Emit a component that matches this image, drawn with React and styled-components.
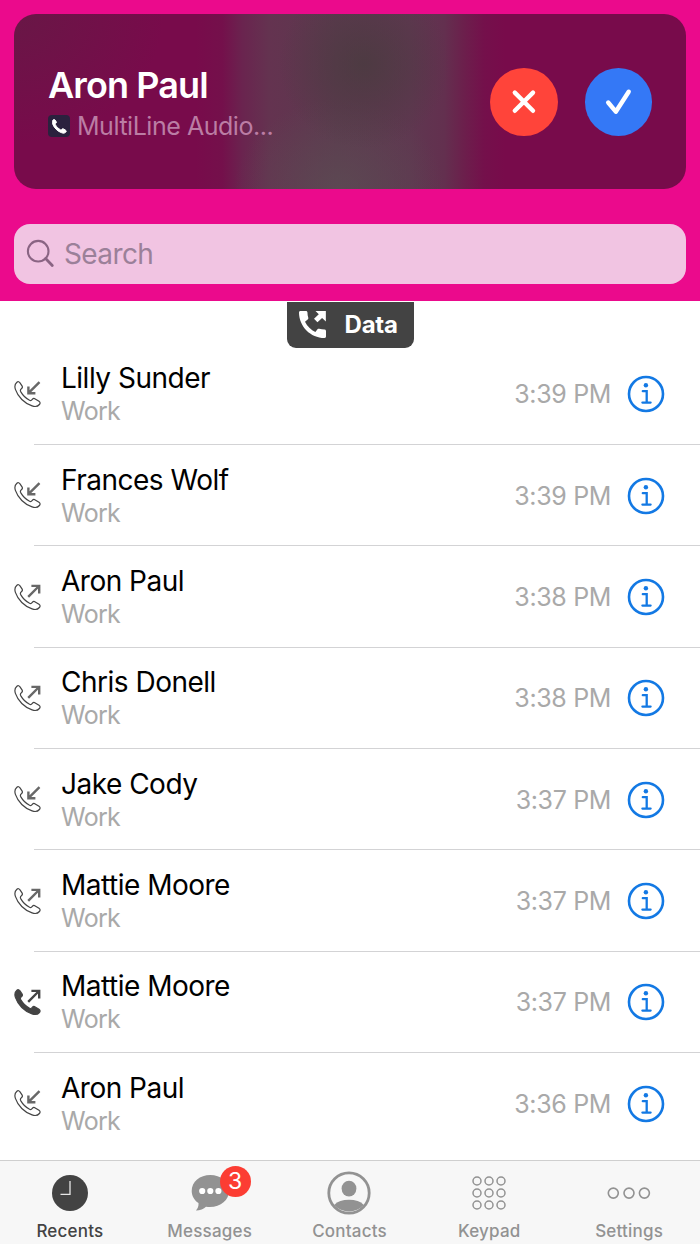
import styled, { createGlobalStyle } from "styled-components";

const calls = [
  { name: "Lilly Sunder", time: "3:39 PM", type: "in" },
  { name: "Frances Wolf", time: "3:39 PM", type: "in" },
  { name: "Aron Paul", time: "3:38 PM", type: "out" },
  { name: "Chris Donell", time: "3:38 PM", type: "out" },
  { name: "Jake Cody", time: "3:37 PM", type: "in" },
  { name: "Mattie Moore", time: "3:37 PM", type: "out" },
  { name: "Mattie Moore", time: "3:37 PM", type: "out", filled: true },
  { name: "Aron Paul", time: "3:36 PM", type: "in" },
];

const HANDSET =
  "M2.5 1.2C3.6.3 4.8.7 5.6 1.9L7.6 4.9C8.3 6 8 7 7 7.7C5.8 8.6 5.6 9.2 6.3 10.6C8.2 14 11.5 17.3 15.2 19.3C16.4 19.9 17 19.6 17.9 18.4C18.7 17.4 19.8 17.3 20.8 17.9L24.6 20.3C25.9 21.2 26 22.3 25 23.5C23.4 25.5 20.8 26 17.7 24.9C10 22.3 3.5 15.8 1 8.4C0 5.3.5 2.9 2.5 1.2Z";

const SOLID_HANDSET =
  "M20.01 15.38c-1.23 0-2.42-.2-3.53-.56-.35-.12-.74-.03-1.01.24l-1.57 1.97c-2.83-1.35-5.48-3.9-6.89-6.83l1.95-1.66c.27-.28.35-.67.24-1.02-.37-1.11-.56-2.3-.56-3.53 0-.54-.45-.99-.99-.99H4.19C3.65 3 3 3.24 3 3.99 3 13.28 10.73 21 20.01 21c.71 0 .99-.63.99-1.18v-3.45c0-.54-.45-.99-.99-.99z";

function CallIcon({ type, filled }) {
  const arrow =
    type === "in"
      ? "M25.1 1.2L14 12.2M14 5.4V12.3H21"
      : "M13.8 12.8L24.6 2M17 1.9H24.8V9.6";
  return (
    <svg width="27" height="27" viewBox="-.4 0 27 27" fill="none">
      <path
        d={HANDSET}
        fill={filled ? "#444" : "none"}
        stroke="#444"
        strokeWidth="1.2"
      />
      <path d={arrow} stroke={filled ? "#444" : "#686868"} strokeWidth="2.4" />
    </svg>
  );
}

function InfoIcon() {
  return (
    <svg width="38" height="38" viewBox="0 0 38 38" fill="none">
      <circle cx="19" cy="19" r="17" stroke="#1379e4" strokeWidth="2.6" />
      <circle cx="18.9" cy="10.2" r="2.2" fill="#1379e4" />
      <path
        d="M15.8 16.2H19.7V27.6M15.4 27.6H23.6"
        stroke="#1379e4"
        strokeWidth="2.3"
        strokeLinecap="round"
      />
    </svg>
  );
}

function RecentsIcon() {
  return (
    <svg width="44" height="44" viewBox="0 0 44 44" fill="none">
      <circle cx="22" cy="22" r="18" fill="#434343" />
      <path d="M22 10V23.3H12.5" stroke="#e6e6e6" strokeWidth="1.3" />
    </svg>
  );
}

function MessagesIcon() {
  return (
    <svg width="44" height="44" viewBox="0 0 44 44">
      <path
        d="M22.3 4C12 4 3.7 10.7 3.7 20C3.7 25 6.3 29.2 10.5 32C10.8 35 9.7 37.5 7.9 39.6C12.2 39.6 15.7 38 18 35.7C31 37.5 41 30 41 20C41 10.7 32.6 4 22.3 4Z"
        fill="#929292"
      />
      <circle cx="14.2" cy="20" r="3.1" fill="#fff" />
      <circle cx="22.3" cy="20" r="3.1" fill="#fff" />
      <circle cx="30.4" cy="20" r="3.1" fill="#fff" />
    </svg>
  );
}

function ContactsIcon() {
  return (
    <svg width="44" height="44" viewBox="0 0 44 44">
      <circle cx="22" cy="22" r="20.2" fill="none" stroke="#929292" strokeWidth="2.8" />
      <ellipse cx="22" cy="17.6" rx="7.4" ry="7.9" fill="#929292" />
      <path
        d="M7.2 34C10.5 30.4 15.5 28.8 22 28.8C28.5 28.8 33.500 30.4 36.8 34A20 20 0 0 1 7.2 34Z"
        fill="#929292"
      />
    </svg>
  );
}

function KeypadIcon() {
  const spots = [10, 22, 34];
  return (
    <svg width="44" height="44" viewBox="0 0 44 44" fill="none" stroke="#929292">
      {spots.map((y) =>
        spots.map((x) => <circle key={`${x}-${y}`} cx={x} cy={y} r="4" strokeWidth="1.5" />)
      )}
    </svg>
  );
}

function SettingsIcon() {
  return (
    <svg width="44" height="44" viewBox="0 0 44 44" fill="none" stroke="#929292">
      {[6.3, 22, 37.4].map((x) => (
        <circle key={x} cx={x} cy="22.1" r="5" strokeWidth="1.6" />
      ))}
    </svg>
  );
}

const tabs = [
  { label: "Recents", icon: <RecentsIcon />, active: true },
  { label: "Messages", icon: <MessagesIcon />, badge: 3 },
  { label: "Contacts", icon: <ContactsIcon /> },
  { label: "Keypad", icon: <KeypadIcon /> },
  { label: "Settings", icon: <SettingsIcon /> },
];

export default function App() {
  return (
    <Screen>
      <GlobalStyle />
      <Header>
        <IncomingCall>
          <Caller>
            <CallerName>Aron Paul</CallerName>
            <CallerLine>
              <AppBadge>
                <svg width="15" height="15" viewBox="0 0 27 27">
                  <path d={HANDSET} fill="#fff" stroke="#fff" strokeWidth="1.8" />
                </svg>
              </AppBadge>
              MultiLine Audio...
            </CallerLine>
          </Caller>
          <RoundButton $color="#ff443a" aria-label="Decline">
            <svg width="68" height="68" viewBox="0 0 68 68">
              <path d="M24.8 24.6L43 42.8M43 24.6L24.8 42.8" />
            </svg>
          </RoundButton>
          <RoundButton $color="#3478f6" aria-label="Accept">
            <svg width="68" height="68" viewBox="0 0 68 68">
              <path d="M23.2 34.5L30.8 43.7L43.7 23.7" />
            </svg>
          </RoundButton>
        </IncomingCall>
        <SearchBar>
          <svg width="30" height="30" viewBox="0 0 30 30" fill="none" stroke="#8a6483">
            <circle cx="12.2" cy="12.2" r="10.3" strokeWidth="2.1" />
            <path d="M19.6 19.6L26.3 26.4" strokeWidth="2.8" strokeLinecap="round" />
          </svg>
          <SearchText>Search</SearchText>
        </SearchBar>
      </Header>

      <TagRow>
        <DataTag>
          <svg width="27" height="27" viewBox="3 3 18 18" fill="#fff">
            <path d={SOLID_HANDSET} />
            <path d="M14 3H20.9V10L18.4 7.6L15.3 10.5L13 8.2L16.2 5.2Z" />
          </svg>
          <TagText>Data</TagText>
        </DataTag>
      </TagRow>

      <CallList>
        {calls.map((call, index) => (
          <CallRow key={index}>
            <CallIcon type={call.type} filled={call.filled} />
            <Contact>
              <Name>{call.name}</Name>
              <Label>Work</Label>
            </Contact>
            <Time>{call.time}</Time>
            <InfoIcon />
          </CallRow>
        ))}
      </CallList>

      <TabBar>
        {tabs.map((tab) => (
          <Tab key={tab.label} $active={tab.active}>
            <TabIcon>
              {tab.icon}
              {tab.badge && <Badge>{tab.badge}</Badge>}
            </TabIcon>
            <TabLabel>{tab.label}</TabLabel>
          </Tab>
        ))}
      </TabBar>
    </Screen>
  );
}

const GlobalStyle = createGlobalStyle`
  * {
    box-sizing: border-box;
  }
  body {
    margin: 0;
    background: #fff;
    font-family: Inter, "Liberation Sans", sans-serif;
  }
  svg {
    display: block;
    flex-shrink: 0;
  }
`;

const Screen = styled.div`
  width: 700px;
  height: 1244px;
  display: flex;
  flex-direction: column;
  overflow: hidden;
  background: #fff;
`;

const Header = styled.header`
  height: 301px;
  flex-shrink: 0;
  padding: 14px 14px 0;
  background: #eb0a8c;
`;

const IncomingCall = styled.section`
  height: 175px;
  display: flex;
  align-items: center;
  gap: 27px;
  padding: 0 34px;
  border-radius: 22px;
  background: radial-gradient(ellipse 85px 85px at 350px 50px, rgba(72, 59, 62, 0.75), transparent),
    radial-gradient(ellipse 105px 90px at 325px 175px, rgba(92, 77, 84, 0.75), transparent),
    radial-gradient(ellipse 150px 130px at 0 0, rgba(98, 28, 68, 0.7), transparent),
    linear-gradient(
      90deg,
      #780b4b 27%,
      #74104b 31%,
      #6a244f 34%,
      #643350 38%,
      #5c394e 48%,
      #5f3750 59%,
      #63304f 64%,
      #6c1f4c 67%,
      #74104b 70%,
      #780b4b 73%
    );
`;

const Caller = styled.div`
  flex: 1;
`;

const CallerName = styled.div`
  margin-top: 3px;
  color: #fff;
  font-size: 36px;
  font-weight: 600;
  line-height: 44px;
  letter-spacing: -0.9px;
`;

const CallerLine = styled.div`
  display: flex;
  align-items: center;
  gap: 7px;
  margin-top: 2px;
  color: #bb7da4;
  font-size: 25px;
  line-height: 34px;
  letter-spacing: -0.47px;
  white-space: nowrap;
`;

const AppBadge = styled.span`
  width: 22px;
  height: 22px;
  display: flex;
  align-items: center;
  justify-content: center;
  border-radius: 4px;
  background: #2b213e;
`;

const RoundButton = styled.button`
  width: 67.5px;
  height: 68px;
  padding: 0;
  border: none;
  border-radius: 50%;
  background: ${({ $color }) => $color};

  path {
    fill: none;
    stroke: #fff;
    stroke-width: 4.4;
    stroke-linecap: round;
    stroke-linejoin: round;
  }
`;

const SearchBar = styled.div`
  height: 60.5px;
  display: flex;
  align-items: center;
  gap: 8px;
  margin-top: 34.5px;
  padding-left: 12px;
  border-radius: 16px;
  background: #f1c4e2;
`;

const SearchText = styled.span`
  margin-top: 1px;
  color: #9b8099;
  font-size: 28px;
  line-height: 34px;
  letter-spacing: -0.6px;
`;

const TagRow = styled.div`
  height: 42.7px;
  flex-shrink: 0;
  display: flex;
  justify-content: center;
  align-items: flex-start;
  padding-top: 1px;
`;

const DataTag = styled.div`
  width: 127px;
  height: 46px;
  flex-shrink: 0;
  display: flex;
  align-items: center;
  gap: 19px;
  padding: 0 0 1px 12px;
  border-radius: 0 0 9px 9px;
  background: #434343;
`;

const TagText = styled.span`
  color: #fff;
  font-size: 24px;
  font-weight: 700;
  letter-spacing: -0.2px;
`;

const CallList = styled.main`
  flex: 1;
  min-height: 0;
`;

const CallRow = styled.div`
  height: 101.35px;
  display: flex;
  align-items: center;
  padding: 0 35px 0 14px;
  background: linear-gradient(#d3d3d5, #d3d3d5) 34px 100% / 100% 1px no-repeat;

  &:last-child {
    background: none;
  }
`;

const Contact = styled.div`
  flex: 1;
  margin-left: 20px;
`;

const Name = styled.div`
  color: #000;
  font-size: 28px;
  line-height: 34px;
  letter-spacing: -0.5px;
`;

const Label = styled.div`
  color: #a9a9a9;
  font-size: 25px;
  line-height: 32px;
  letter-spacing: -0.7px;
`;

const Time = styled.time`
  margin-right: 16px;
  color: #a9a9a9;
  font-size: 25px;
  letter-spacing: -0.35px;
`;

const TabBar = styled.nav`
  height: 84px;
  flex-shrink: 0;
  display: grid;
  grid-template-columns: repeat(5, 1fr);
  padding-right: 1px;
  border-top: 1px solid #cfcfcf;
  background: #f7f7f7;
`;

const Tab = styled.div`
  display: flex;
  flex-direction: column;
  align-items: center;
  padding-top: 9.5px;
  color: ${({ $active }) => ($active ? "#434343" : "#929292")};
`;

const TabIcon = styled.div`
  position: relative;
`;

const Badge = styled.span`
  position: absolute;
  top: -4.5px;
  left: 32px;
  width: 31px;
  height: 31px;
  border-radius: 50%;
  background: #fc3d33;
  color: #fff;
  font-size: 23px;
  line-height: 31px;
  text-align: center;
`;

const TabLabel = styled.span`
  margin-top: 5.5px;
  font-size: 17px;
  font-weight: 500;
  line-height: 22px;
  letter-spacing: 0.2px;
`;
